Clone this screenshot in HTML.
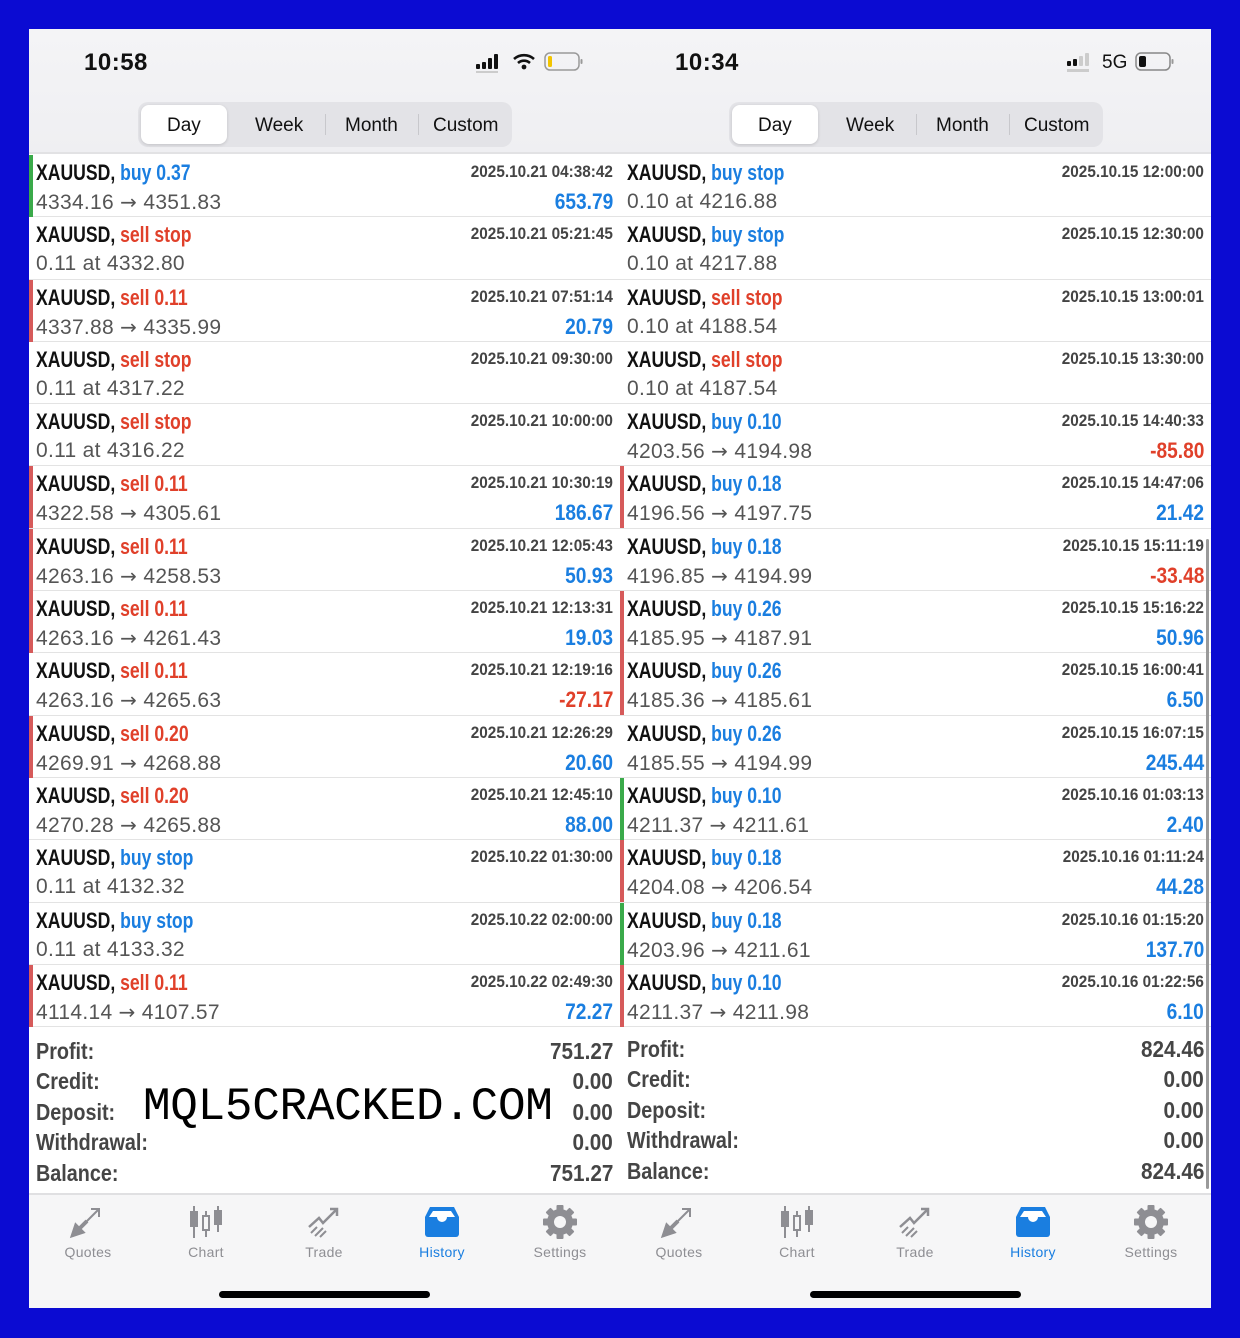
<!DOCTYPE html>
<html><head><meta charset="utf-8"><style>
*{margin:0;padding:0;box-sizing:border-box}
body{width:1240px;height:1338px;background:#0b0bd2;position:relative;overflow:hidden;font-family:"Liberation Sans",Arial,sans-serif}
.pn{position:absolute;top:29px;width:591px;height:1279px;background:#fff;overflow:hidden}
.hd{position:absolute;left:0;top:0;width:591px;height:125px;background:linear-gradient(#f4f4f6,#efeff2);border-bottom:2px solid #e2e2e4}
.tm{position:absolute;left:55px;top:20px;font-size:24px;font-weight:bold;color:#111;letter-spacing:.5px}
.seg{position:absolute;left:109px;top:73px;width:374px;height:45px;background:#e3e3e7;border-radius:10px}
.seg span{position:absolute;top:1px;line-height:45px;font-size:19px;color:#111}
.seg .on{left:3px;top:3px;width:86px;height:39px;background:#fff;border-radius:8px;box-shadow:0 1px 3px rgba(0,0,0,.15)}
.seg .sp{position:absolute;top:12px;width:1px;height:21px;background:#c8c8cc}
.rows{position:absolute;left:0;top:126px;width:591px}
.r{position:relative;height:62.3px;border-bottom:1px solid #e3e3e3}
.r.g:before,.r.x:before{content:"";position:absolute;left:0;top:0;width:4px;height:62px;background:#3aaa4a}
.r.x:before{background:#d65a5a}
.l1{position:absolute;left:7px;top:5px;line-height:26px;font-size:22px;font-weight:bold;color:#111;transform:scaleX(.8);transform-origin:left;white-space:nowrap}
.l2{position:absolute;left:7px;top:34px;line-height:26px;font-size:21px;color:#555;white-space:nowrap;letter-spacing:.3px}
.l2 i{font-style:normal;font-family:"DejaVu Sans",sans-serif;font-size:20px}
.d{position:absolute;right:7px;top:5px;line-height:24px;font-size:17px;font-weight:bold;color:#444;transform:scaleX(.9);transform-origin:right;white-space:nowrap}
.p{position:absolute;right:7px;top:34px;line-height:26px;font-size:22px;font-weight:bold;transform:scaleX(.87);transform-origin:right;white-space:nowrap}
.b{color:#1a7ee0}.s{color:#e0402a}
.sm{position:absolute;left:0;top:1007px;width:591px}
.sm div{position:relative;height:30.4px}
.sm .k,.sm .v{position:absolute;top:0;line-height:30px;font-size:23px;font-weight:bold;color:#454545;transform:scaleX(.86);white-space:nowrap}
.sm .k{left:7px;transform-origin:left}.sm .v{right:7px;transform-origin:right;transform:scaleX(.9)}
.tb{position:absolute;left:0;top:1164px;width:591px;height:115px;background:#f6f6f7;border-top:2px solid #e0e0e2}
.ti{position:absolute;top:10px;width:80px;text-align:center;margin-left:-40px}
.ti svg{display:block;margin:0 auto}
.ti span{display:block;margin-top:5px;font-size:14px;color:#8e8e93;letter-spacing:.3px}
.home{position:absolute;left:190px;top:1262px;width:211px;height:7px;border-radius:4px;background:#000}
.wm{position:absolute;font-family:"Liberation Mono",monospace;font-size:46px;color:#000;letter-spacing:-0.3px;line-height:58px}
</style></head><body>

<!-- LEFT PANEL -->
<div class="pn" style="left:29px">
 <div class="hd">
  <div class="tm">10:58</div>
  <svg style="position:absolute;left:447px;top:24px" width="30" height="20"><rect x="0" y="11" width="4" height="5" rx="1" fill="#111"/><rect x="6" y="9" width="4" height="7" rx="1" fill="#111"/><rect x="12" y="5" width="4" height="11" rx="1" fill="#111"/><rect x="18" y="1" width="4" height="15" rx="1" fill="#111"/><rect x="0" y="18" width="22" height="2" fill="#ccc"/></svg>
  <svg style="position:absolute;left:484px;top:24px" width="22" height="18" viewBox="0 0 22 18"><path d="M1 6a15 15 0 0 1 20 0" stroke="#111" stroke-width="2.6" fill="none"/><path d="M5 10a9 9 0 0 1 12 0" stroke="#111" stroke-width="2.6" fill="none"/><circle cx="11" cy="14" r="2.4" fill="#111"/></svg>
  <svg style="position:absolute;left:515px;top:23px" width="40" height="20"><rect x="1" y="1" width="34" height="17" rx="5" fill="none" stroke="#999" stroke-width="1.5"/><rect x="4" y="4" width="4" height="11" rx="1.5" fill="#f2c400"/><rect x="36.5" y="7" width="2" height="5" rx="1" fill="#999"/></svg>
  <div class="seg"><div class="on" style="position:absolute"></div>
   <span style="left:29px">Day</span><span style="left:117px">Week</span><span style="left:207px">Month</span><span style="left:295px">Custom</span>
   <div class="sp" style="left:187px"></div><div class="sp" style="left:280px"></div></div>
 </div>
 <div class="rows">
  <div class="r g"><div class="l1">XAUUSD, <span class="b">buy 0.37</span></div><div class="d">2025.10.21 04:38:42</div><div class="l2">4334.16 <i>→</i> 4351.83</div><div class="p b">653.79</div></div>
  <div class="r"><div class="l1">XAUUSD, <span class="s">sell stop</span></div><div class="d">2025.10.21 05:21:45</div><div class="l2">0.11 at 4332.80</div></div>
  <div class="r x"><div class="l1">XAUUSD, <span class="s">sell 0.11</span></div><div class="d">2025.10.21 07:51:14</div><div class="l2">4337.88 <i>→</i> 4335.99</div><div class="p b">20.79</div></div>
  <div class="r"><div class="l1">XAUUSD, <span class="s">sell stop</span></div><div class="d">2025.10.21 09:30:00</div><div class="l2">0.11 at 4317.22</div></div>
  <div class="r"><div class="l1">XAUUSD, <span class="s">sell stop</span></div><div class="d">2025.10.21 10:00:00</div><div class="l2">0.11 at 4316.22</div></div>
  <div class="r x"><div class="l1">XAUUSD, <span class="s">sell 0.11</span></div><div class="d">2025.10.21 10:30:19</div><div class="l2">4322.58 <i>→</i> 4305.61</div><div class="p b">186.67</div></div>
  <div class="r x"><div class="l1">XAUUSD, <span class="s">sell 0.11</span></div><div class="d">2025.10.21 12:05:43</div><div class="l2">4263.16 <i>→</i> 4258.53</div><div class="p b">50.93</div></div>
  <div class="r x"><div class="l1">XAUUSD, <span class="s">sell 0.11</span></div><div class="d">2025.10.21 12:13:31</div><div class="l2">4263.16 <i>→</i> 4261.43</div><div class="p b">19.03</div></div>
  <div class="r"><div class="l1">XAUUSD, <span class="s">sell 0.11</span></div><div class="d">2025.10.21 12:19:16</div><div class="l2">4263.16 <i>→</i> 4265.63</div><div class="p s">-27.17</div></div>
  <div class="r x"><div class="l1">XAUUSD, <span class="s">sell 0.20</span></div><div class="d">2025.10.21 12:26:29</div><div class="l2">4269.91 <i>→</i> 4268.88</div><div class="p b">20.60</div></div>
  <div class="r"><div class="l1">XAUUSD, <span class="s">sell 0.20</span></div><div class="d">2025.10.21 12:45:10</div><div class="l2">4270.28 <i>→</i> 4265.88</div><div class="p b">88.00</div></div>
  <div class="r"><div class="l1">XAUUSD, <span class="b">buy stop</span></div><div class="d">2025.10.22 01:30:00</div><div class="l2">0.11 at 4132.32</div></div>
  <div class="r"><div class="l1">XAUUSD, <span class="b">buy stop</span></div><div class="d">2025.10.22 02:00:00</div><div class="l2">0.11 at 4133.32</div></div>
  <div class="r x"><div class="l1">XAUUSD, <span class="s">sell 0.11</span></div><div class="d">2025.10.22 02:49:30</div><div class="l2">4114.14 <i>→</i> 4107.57</div><div class="p b">72.27</div></div>
 </div>
 <div class="sm">
  <div><span class="k">Profit:</span><span class="v">751.27</span></div>
  <div><span class="k">Credit:</span><span class="v">0.00</span></div>
  <div><span class="k">Deposit:</span><span class="v">0.00</span></div>
  <div><span class="k">Withdrawal:</span><span class="v">0.00</span></div>
  <div><span class="k">Balance:</span><span class="v">751.27</span></div>
 </div>
 <div class="wm" style="left:114px;top:1049px">MQL5CRACKED.COM</div>
 <div class="tb">
  <div class="ti" style="left:59px"><svg width="38" height="34" viewBox="0 0 38 34"><path d="M4 30l9-3-6-6z M10 24l8-8" stroke="#8e8e93" stroke-width="4" fill="#8e8e93"/><path d="M16 18l13-13M22 4h8v8" stroke="#8e8e93" stroke-width="2" fill="none"/></svg><span>Quotes</span></div>
  <div class="ti" style="left:177px"><svg width="38" height="34" viewBox="0 0 38 34"><g fill="#8e8e93" stroke="#8e8e93" stroke-width="2"><path d="M7 1v32M19 6v26M31 1v26"/><rect x="4" y="7" width="6" height="14"/><rect x="16" y="11" width="6" height="14" fill="#f6f6f7"/><rect x="28" y="6" width="6" height="13"/></g></svg><span>Chart</span></div>
  <div class="ti" style="left:295px"><svg width="38" height="34" viewBox="0 0 38 34"><path d="M4 22l10-9 4 5 14-14M25 4h7v7" stroke="#8e8e93" stroke-width="2.5" fill="none"/><path d="M6 28l6-6M10 31l8-8M15 32l6-6" stroke="#8e8e93" stroke-width="2"/></svg><span>Trade</span></div>
  <div class="ti" style="left:413px"><svg width="38" height="34" viewBox="0 0 38 34"><path d="M7 2h24l5 10v17a3 3 0 0 1-3 3H5a3 3 0 0 1-3-3V12z" fill="#1a7ee0"/><path d="M6 12h8a5 5 0 0 0 10 0h8l-4-6H10z" fill="#fff"/></svg><span style="color:#1a7ee0">History</span></div>
  <div class="ti" style="left:531px"><svg width="38" height="34" viewBox="0 0 38 34"><g transform="translate(19 17)"><circle r="13" fill="#8e8e93"/><g fill="#8e8e93"><rect x="-3.5" y="-17" width="7" height="34" rx="1"/><rect x="-3.5" y="-17" width="7" height="34" rx="1" transform="rotate(45)"/><rect x="-3.5" y="-17" width="7" height="34" rx="1" transform="rotate(90)"/><rect x="-3.5" y="-17" width="7" height="34" rx="1" transform="rotate(135)"/></g><circle r="6" fill="#f6f6f7"/></g></svg><span>Settings</span></div>
 </div>
 <div class="home"></div>
</div>

<!-- RIGHT PANEL -->
<div class="pn" style="left:620px">
 <div class="hd">
  <div class="tm">10:34</div>
  <svg style="position:absolute;left:447px;top:24px" width="30" height="20"><rect x="0" y="8" width="4" height="5" rx="1" fill="#111"/><rect x="6" y="6" width="4" height="7" rx="1" fill="#111"/><rect x="12" y="3" width="4" height="10" rx="1" fill="#ccc"/><rect x="18" y="0" width="4" height="13" rx="1" fill="#ccc"/><rect x="0" y="16" width="22" height="3" fill="#ccc"/></svg>
  <div style="position:absolute;left:482px;top:23px;font-size:19px;color:#111;line-height:22px">5G</div>
  <svg style="position:absolute;left:515px;top:23px" width="40" height="20"><rect x="1" y="1" width="34" height="17" rx="5" fill="none" stroke="#888" stroke-width="1.5"/><rect x="4" y="4" width="7" height="11" rx="2" fill="#111"/><rect x="36.5" y="7" width="2" height="5" rx="1" fill="#999"/></svg>
  <div class="seg"><div class="on" style="position:absolute"></div>
   <span style="left:29px">Day</span><span style="left:117px">Week</span><span style="left:207px">Month</span><span style="left:295px">Custom</span>
   <div class="sp" style="left:187px"></div><div class="sp" style="left:280px"></div></div>
 </div>
 <div class="rows">
  <div class="r"><div class="l1">XAUUSD, <span class="b">buy stop</span></div><div class="d">2025.10.15 12:00:00</div><div class="l2">0.10 at 4216.88</div></div>
  <div class="r"><div class="l1">XAUUSD, <span class="b">buy stop</span></div><div class="d">2025.10.15 12:30:00</div><div class="l2">0.10 at 4217.88</div></div>
  <div class="r"><div class="l1">XAUUSD, <span class="s">sell stop</span></div><div class="d">2025.10.15 13:00:01</div><div class="l2">0.10 at 4188.54</div></div>
  <div class="r"><div class="l1">XAUUSD, <span class="s">sell stop</span></div><div class="d">2025.10.15 13:30:00</div><div class="l2">0.10 at 4187.54</div></div>
  <div class="r"><div class="l1">XAUUSD, <span class="b">buy 0.10</span></div><div class="d">2025.10.15 14:40:33</div><div class="l2">4203.56 <i>→</i> 4194.98</div><div class="p s">-85.80</div></div>
  <div class="r x"><div class="l1">XAUUSD, <span class="b">buy 0.18</span></div><div class="d">2025.10.15 14:47:06</div><div class="l2">4196.56 <i>→</i> 4197.75</div><div class="p b">21.42</div></div>
  <div class="r"><div class="l1">XAUUSD, <span class="b">buy 0.18</span></div><div class="d">2025.10.15 15:11:19</div><div class="l2">4196.85 <i>→</i> 4194.99</div><div class="p s">-33.48</div></div>
  <div class="r x"><div class="l1">XAUUSD, <span class="b">buy 0.26</span></div><div class="d">2025.10.15 15:16:22</div><div class="l2">4185.95 <i>→</i> 4187.91</div><div class="p b">50.96</div></div>
  <div class="r x"><div class="l1">XAUUSD, <span class="b">buy 0.26</span></div><div class="d">2025.10.15 16:00:41</div><div class="l2">4185.36 <i>→</i> 4185.61</div><div class="p b">6.50</div></div>
  <div class="r"><div class="l1">XAUUSD, <span class="b">buy 0.26</span></div><div class="d">2025.10.15 16:07:15</div><div class="l2">4185.55 <i>→</i> 4194.99</div><div class="p b">245.44</div></div>
  <div class="r g"><div class="l1">XAUUSD, <span class="b">buy 0.10</span></div><div class="d">2025.10.16 01:03:13</div><div class="l2">4211.37 <i>→</i> 4211.61</div><div class="p b">2.40</div></div>
  <div class="r x"><div class="l1">XAUUSD, <span class="b">buy 0.18</span></div><div class="d">2025.10.16 01:11:24</div><div class="l2">4204.08 <i>→</i> 4206.54</div><div class="p b">44.28</div></div>
  <div class="r g"><div class="l1">XAUUSD, <span class="b">buy 0.18</span></div><div class="d">2025.10.16 01:15:20</div><div class="l2">4203.96 <i>→</i> 4211.61</div><div class="p b">137.70</div></div>
  <div class="r x"><div class="l1">XAUUSD, <span class="b">buy 0.10</span></div><div class="d">2025.10.16 01:22:56</div><div class="l2">4211.37 <i>→</i> 4211.98</div><div class="p b">6.10</div></div>
 </div>
 <div class="sm" style="top:1005px">
  <div><span class="k">Profit:</span><span class="v">824.46</span></div>
  <div><span class="k">Credit:</span><span class="v">0.00</span></div>
  <div><span class="k">Deposit:</span><span class="v">0.00</span></div>
  <div><span class="k">Withdrawal:</span><span class="v">0.00</span></div>
  <div><span class="k">Balance:</span><span class="v">824.46</span></div>
 </div>
 <div style="position:absolute;left:586px;top:510px;width:3px;height:650px;border-radius:2px;background:#9a9a9a"></div>
 <div class="tb">
  <div class="ti" style="left:59px"><svg width="38" height="34" viewBox="0 0 38 34"><path d="M4 30l9-3-6-6z M10 24l8-8" stroke="#8e8e93" stroke-width="4" fill="#8e8e93"/><path d="M16 18l13-13M22 4h8v8" stroke="#8e8e93" stroke-width="2" fill="none"/></svg><span>Quotes</span></div>
  <div class="ti" style="left:177px"><svg width="38" height="34" viewBox="0 0 38 34"><g fill="#8e8e93" stroke="#8e8e93" stroke-width="2"><path d="M7 1v32M19 6v26M31 1v26"/><rect x="4" y="7" width="6" height="14"/><rect x="16" y="11" width="6" height="14" fill="#f6f6f7"/><rect x="28" y="6" width="6" height="13"/></g></svg><span>Chart</span></div>
  <div class="ti" style="left:295px"><svg width="38" height="34" viewBox="0 0 38 34"><path d="M4 22l10-9 4 5 14-14M25 4h7v7" stroke="#8e8e93" stroke-width="2.5" fill="none"/><path d="M6 28l6-6M10 31l8-8M15 32l6-6" stroke="#8e8e93" stroke-width="2"/></svg><span>Trade</span></div>
  <div class="ti" style="left:413px"><svg width="38" height="34" viewBox="0 0 38 34"><path d="M7 2h24l5 10v17a3 3 0 0 1-3 3H5a3 3 0 0 1-3-3V12z" fill="#1a7ee0"/><path d="M6 12h8a5 5 0 0 0 10 0h8l-4-6H10z" fill="#fff"/></svg><span style="color:#1a7ee0">History</span></div>
  <div class="ti" style="left:531px"><svg width="38" height="34" viewBox="0 0 38 34"><g transform="translate(19 17)"><circle r="13" fill="#8e8e93"/><g fill="#8e8e93"><rect x="-3.5" y="-17" width="7" height="34" rx="1"/><rect x="-3.5" y="-17" width="7" height="34" rx="1" transform="rotate(45)"/><rect x="-3.5" y="-17" width="7" height="34" rx="1" transform="rotate(90)"/><rect x="-3.5" y="-17" width="7" height="34" rx="1" transform="rotate(135)"/></g><circle r="6" fill="#f6f6f7"/></g></svg><span>Settings</span></div>
 </div>
 <div class="home"></div>
</div>
</body></html>
